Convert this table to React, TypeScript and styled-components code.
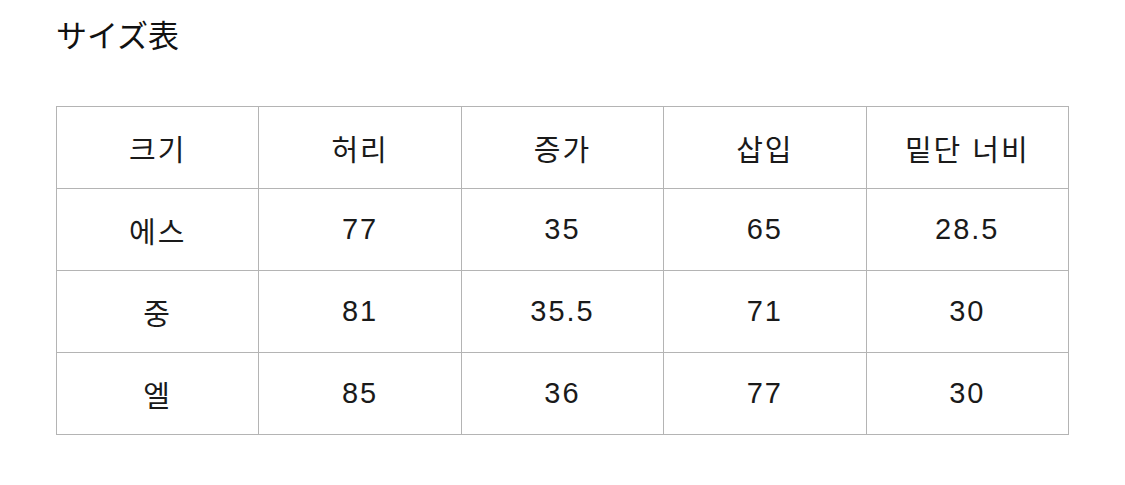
import React from "react";
import styled, { createGlobalStyle } from "styled-components";

const Global = createGlobalStyle`
  html, body { margin: 0; padding: 0; background: #ffffff; }
  body { font-family: "Liberation Sans", "Noto Sans CJK KR", "Noto Sans CJK JP", sans-serif; color: #1a1a1a; }
`;

const Page = styled.div`
  width: 1125px;
  height: 485px;
  box-sizing: border-box;
  padding: 13px 0 0 56px;
  display: flex;
  flex-direction: column;
`;

const Title = styled.h1`
  margin: 0 0 0 0;
  font-family: "Noto Sans CJK JP", sans-serif;
  font-size: 31px;
  font-weight: 400;
  line-height: 42px;
  color: #111;
`;

const Table = styled.table`
  margin-top: 51px;
  width: 1013px;
  border-collapse: collapse;
  table-layout: fixed;
`;

const Cell = styled.td`
  height: 81px;
  padding: 0;
  border: 1px solid #b4b4b4;
  text-align: center;
  vertical-align: middle;
  font-family: "Liberation Sans", "Noto Sans CJK KR", sans-serif;
  font-size: 29px;
  font-weight: 400;
  letter-spacing: 2px;
  color: #1a1a1a;
`;

const header = ["크기", "허리", "증가", "삽입", "밑단 너비"];
const rows = [
  ["에스", "77", "35", "65", "28.5"],
  ["중", "81", "35.5", "71", "30"],
  ["엘", "85", "36", "77", "30"],
];

export default function App() {
  return (
    <>
      <Global />
      <Page>
        <Title>サイズ表</Title>
        <Table>
          <tbody>
            <tr>
              {header.map((h) => (
                <Cell key={h}>{h}</Cell>
              ))}
            </tr>
            {rows.map((r) => (
              <tr key={r[0]}>
                {r.map((c, i) => (
                  <Cell key={i}>{c}</Cell>
                ))}
              </tr>
            ))}
          </tbody>
        </Table>
      </Page>
    </>
  );
}
